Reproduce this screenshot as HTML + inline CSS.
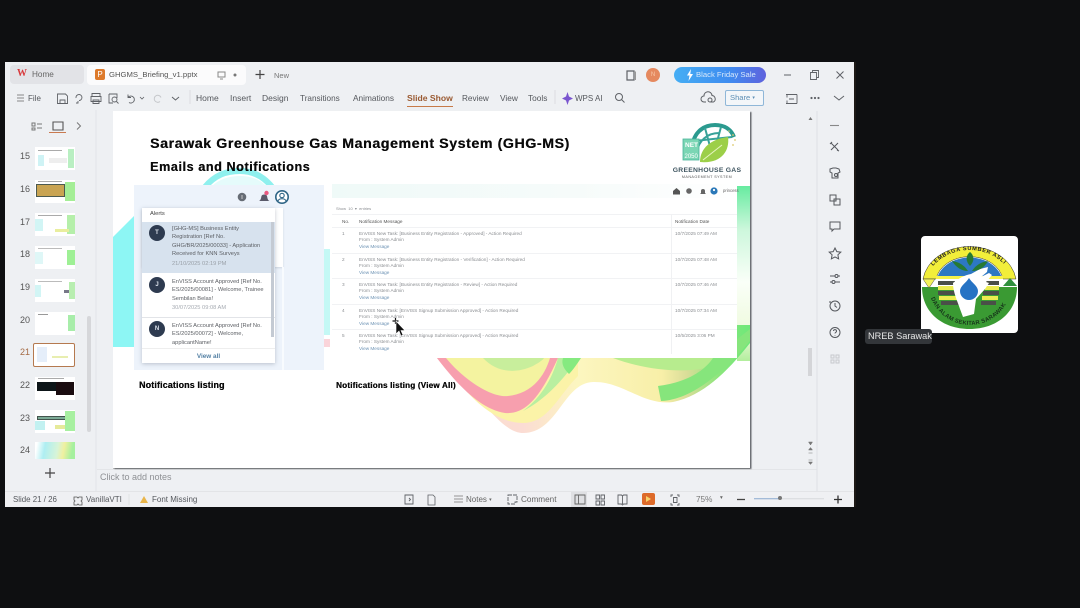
<!DOCTYPE html>
<html lang="en"><head><meta charset="utf-8"><title>GHG-MS Briefing</title>
<style>
*{box-sizing:border-box;margin:0;padding:0}
html,body{width:1080px;height:608px;overflow:hidden;background:#0e0f11;font-family:"Liberation Sans",sans-serif}
.a{position:absolute;white-space:nowrap}
#win{position:absolute;left:5px;top:62px;width:849px;height:445px;background:#eef0f3}
.t{position:absolute;white-space:nowrap;color:#55585d;font-size:8.5px;line-height:11px;filter:blur(.3px)}
.th{position:absolute;left:35px;width:40px;height:23px;background:#fff;overflow:hidden}
.n{position:absolute;left:20px;font-size:9px;color:#555;filter:blur(.25px)}
.nt{position:absolute;font-size:4.7px;line-height:6.4px;color:#8a8d91;white-space:nowrap;filter:blur(.3px)}
.al{position:absolute;font-size:5.7px;line-height:8.4px;color:#5c5f64;white-space:nowrap;filter:blur(.25px)}
.sep{position:absolute;left:219px;width:405px;height:1px;background:#f1f2f4}
.h{text-shadow:.3px 0 0 #0a0a0a}
svg{position:absolute;overflow:visible}
</style></head><body>
<div class="a" style="left:854px;top:62px;width:2px;height:445px;background:#1c1815"></div>
<div id="win"></div>

<!-- notes + status backgrounds -->
<div class="a" style="left:97px;top:469px;width:720px;height:22px;background:#eef0f3;border-top:1px solid #e3e5e8"></div>
<div class="a" style="left:5px;top:491px;width:849px;height:16px;background:#eff0f3;border-top:1px solid #e3e4e7"></div>
<div class="a" style="left:571px;top:492px;width:16px;height:15px;background:#dfe0e3"></div>

<!-- tabs -->
<div class="a" style="left:10px;top:65px;width:74px;height:19px;background:#e2e3e7;border-radius:4px"></div>
<div class="a" style="left:87px;top:65px;width:159px;height:20px;background:#fbfbfc;border-radius:4px"></div>
<div class="t" style="left:17px;top:68px;font-size:10px;font-weight:bold;color:#d8393c;font-family:'Liberation Serif',serif">W</div>
<div class="t" style="left:32px;top:69px;font-size:8.2px;color:#666">Home</div>
<div class="a" style="left:95px;top:69px;width:10px;height:11px;background:#dd7a2c;border-radius:2px;color:#fff;font-size:8px;line-height:11px;text-align:center">P</div>
<div class="t" style="left:109px;top:69px;font-size:7.7px;color:#555">GHGMS_Briefing_v1.pptx</div>
<svg style="left:0;top:0" width="1080" height="608" fill="none" stroke="#5f6267" stroke-width="1">
<path d="M218 72h7v5h-7zM220 79h3" stroke="#888"/><circle cx="235" cy="75" r="1.5" fill="#777" stroke="none"/>
<path d="M260 70v9M255.500 74.500h9" stroke="#444" stroke-width="1.200"/>
<path d="M627 71h7v9h-7z" stroke-width="1.200"/><path d="M634 72h1.500v8" stroke="#999"/>
<path d="M784 75h7" /><path d="M810.500 72.500h6v7h-6zM812.500 72.500v-2h6v7h-2" stroke-width=".9"/><path d="M836.500 71.500l7 7M843.500 71.500l-7 7"/>
<path d="M17 95h7M17 98h7M17 101h7" stroke="#888"/>
<path d="M57.500 94h8l2 2v7.500h-10zM60 103v-3h5v3" stroke-width=".9"/>
<path d="M76 98a3 3 0 1 1 3 2.500M78 101v2h-2" stroke-width=".9"/>
<path d="M92 96v-2.500h8V96M91 96.500h10v5h-10zM93 100h6v3.500h-6z" stroke-width=".9"/>
<path d="M109 94h8v4M109 94v9h4" stroke-width=".9"/><circle cx="114.500" cy="99.500" r="2.500" stroke-width=".9"/><path d="M116.500 101.500l2 2" stroke-width=".9"/>
<path d="M128 97.500a3.500 3.500 0 1 1 1 5M128 94.500v3h3" stroke-width=".9"/><path d="M140 97l2 2 2-2" stroke-width=".8"/>
<path d="M161 97.500a3.500 3.500 0 1 0-1 4" stroke="#c5c7cb"/><path d="M172 97l3.500 3 3.500-3"/>
<circle cx="619" cy="97" r="3.500"/><path d="M621.500 99.500l3 3"/>
<path d="M190 90v14" stroke="#dcdde0"/><path d="M555 90v14" stroke="#dcdde0"/>
<path d="M706 102h-2a3 3 0 0 1 0-6 4 4 0 0 1 8-.5 3.500 3.500 0 0 1 1.500 6.500h-3"/><circle cx="710" cy="100" r="2"/>
<path d="M786 94.500h11M786 103.500h11M787 94.500v3M787 100.500v3M797 94.500v9M789 99h5" stroke-width=".9"/>
<circle cx="811.500" cy="98" r=".6" fill="#555"/><circle cx="815" cy="98" r=".6" fill="#555"/><circle cx="818.500" cy="98" r=".6" fill="#555"/>
<path d="M834 96l5 4 5-4"/>
<path d="M32 123h3v3h-3zM32 128h3v2h-3zM37 124h5M37 128h5" stroke="#777"/>
<path d="M53 122h10v8h-10z" stroke="#555" stroke-width="1.100"/>
<path d="M77 122.500l3.500 3.500-3.500 3.500" stroke="#777"/>
<path d="M45 473h10M50 468v10" stroke="#444" stroke-width="1.200"/>
<path d="M830 125.500h9" stroke="#888" stroke-width="1.100"/>
<g stroke="#55585d" stroke-width="1">
<path d="M831 143l7 7M838 143l-7 7M830 144l2-2M839 151l-2-1"/>
<path d="M830 169l3-1h3l3 1 1 3-2 1v5h-6v-5l-2-1z"/><circle cx="836" cy="175" r="1.500"/>
<path d="M830 195h6v6h-6zM834 199h6v6h-6z"/>
<path d="M830 222h10v7h-6l-2 2v-2h-2z"/>
<path d="M835 248l1.800 3.600 4 .5-2.900 2.700.7 4-3.600-1.900-3.600 1.900.7-4-2.900-2.700 4-.5z"/>
<path d="M830 276h5M838 276h2M830 282h2M835 282h5"/><circle cx="836.500" cy="276" r="1.500"/><circle cx="833.500" cy="282" r="1.500"/>
<circle cx="835" cy="306" r="5"/><path d="M835 303v3l2 1.500M830 303v-2"/>
<circle cx="835" cy="332.500" r="5"/><path d="M833.500 331a1.500 1.500 0 1 1 2 1.500c-.5.300-.5.800-.5 1M835 335.300v.4"/>
<path d="M831 355h3v3h-3zM836 355h3v3h-3zM831 360h3v3h-3zM836 360h3v3h-3z" stroke="#c7c9cd"/>
</g>
<path d="M817 111v380" stroke="#dfe1e4"/>
<path d="M96 110v381" stroke="#e3e5e8"/>
<path d="M74 497h3l1 1 1-1h3v3l-1 1 1 1v3h-3l-1-1-1 1h-3v-3l1-1-1-1z" stroke="#555" stroke-width=".8"/>
<path d="M144 496l4 7h-8z" fill="#e9b54a" stroke="none"/>
<path d="M129 494v11" stroke="#e2e3e6"/>
<path d="M405 495h8v9h-8zM409 498l1.500 1.500-1.500 1.500" stroke-width=".9"/>
<path d="M428 495h5l2 2v8h-7z" stroke-width=".8"/>
<path d="M454 496h9M454 499h9M454 502h9" stroke="#777" stroke-width=".8"/>
<path d="M508 495h9v7h-2v2h-7z" stroke-width=".9" stroke-dasharray="4 1"/>
<path d="M575 495h10v9h-10zM578.500 495v9" stroke="#666" stroke-width=".9"/>
<path d="M596 495h3.500v4H596zM601 495h3.500v4H601zM596 501h3.500v4H596zM601 501h3.500v4H601z" stroke-width=".9"/>
<path d="M618 495h3.500l1 1 1-1h3.500v9h-3.500l-1 1-1-1H618zM622.500 496v8" stroke-width=".9"/>
<path d="M671 497v-2h2M677 495h2v2M679 503v2h-2M673 505h-2v-2M673.500 497.500h3.500v5h-3.500z" stroke-width=".9"/>
<path d="M737 499.500h8" stroke="#444" stroke-width="1.300"/>
<path d="M834 499.500h8M838 495.500v8" stroke="#333" stroke-width="1.300"/>
<path d="M754 498.700h25" stroke="#8aa9cf" stroke-width="1"/><path d="M782 498.700h42" stroke="#d7d9dc" stroke-width="1"/>
</svg>
<div class="t" style="left:274px;top:70px;font-size:7.5px;color:#777">New</div>
<div class="a" style="left:646px;top:68px;width:14px;height:14px;border-radius:50%;background:#e5895f;color:#f8c8a8;font-size:6px;line-height:14px;text-align:center">N</div>
<div class="a" style="left:674px;top:67px;width:92px;height:16px;border-radius:8px;background:linear-gradient(90deg,#45aef4,#3f8cf0 60%,#5f62dd);color:#d7e8fb;font-size:7.7px;line-height:16px;padding-left:22px;filter:blur(.3px)">Black Friday Sale</div>
<svg style="left:686px;top:69px" width="8" height="12"><path d="M5 0L1 6.500h2.500L2.500 12 7 5H4.300z" fill="#fff"/></svg>

<!-- menu -->
<div class="t" style="left:28px;top:93px;font-size:8px">File</div>
<div class="t" style="left:196px;top:93px">Home</div>
<div class="t" style="left:230px;top:93px">Insert</div>
<div class="t" style="left:262px;top:93px">Design</div>
<div class="t" style="left:300px;top:93px;font-size:8.2px">Transitions</div>
<div class="t" style="left:353px;top:93px;font-size:8.3px">Animations</div>
<div class="t" style="left:407px;top:93px;color:#9a5a32;font-weight:bold;font-size:8.6px">Slide Show</div>
<div class="a" style="left:407px;top:106px;width:46px;height:1px;background:#c77a48"></div>
<div class="t" style="left:462px;top:93px;font-size:8.2px">Review</div>
<div class="t" style="left:500px;top:93px;font-size:8.3px">View</div>
<div class="t" style="left:528px;top:93px;font-size:8.3px">Tools</div>
<div class="t" style="left:575px;top:93px;font-size:8px">WPS AI</div>
<svg style="left:562px;top:92px" width="11" height="13"><path d="M5.500 0l1.500 4.500 4 2-4 2-1.500 4.500-1.500-4.500-4-2 4-2z" fill="#7a55cf"/></svg>
<div class="a" style="left:725px;top:90px;width:39px;height:16px;border:1px solid #8fb7d8;border-radius:2px;background:#f3f6f9;color:#5d8fb5;font-size:7.6px;line-height:14px;padding-left:4px;filter:blur(.2px)">Share <span style="font-size:5px;vertical-align:1px">▾</span></div>

<!-- panel -->
<div class="a" style="left:49px;top:132px;width:17px;height:1px;background:#c97a50"></div>
<div class="a" style="left:87px;top:316px;width:4px;height:116px;background:#d6d7da;border-radius:2px"></div>

<div class="n" style="top:151px">15</div><div class="n" style="top:184px">16</div><div class="n" style="top:217px">17</div><div class="n" style="top:249px">18</div><div class="n" style="top:282px">19</div><div class="n" style="top:315px">20</div><div class="n" style="top:347px;color:#a56b45">21</div><div class="n" style="top:380px">22</div><div class="n" style="top:413px">23</div><div class="n" style="top:445px">24</div>

<div class="th" style="top:147px"><div class="a" style="left:3px;top:3px;width:24px;height:1px;background:#aaa"></div><div class="a" style="left:33px;top:2px;width:6px;height:19px;background:#b9efc2"></div><div class="a" style="left:3px;top:8px;width:6px;height:11px;background:#cff3f5"></div><div class="a" style="left:14px;top:11px;width:18px;height:5px;background:#eee"></div></div>
<div class="th" style="top:180px"><div class="a" style="left:3px;top:1px;width:24px;height:1px;background:#aaa"></div><div class="a" style="left:30px;top:2px;width:10px;height:19px;background:#a4ee96"></div><div class="a" style="left:1px;top:4px;width:29px;height:13px;background:#c9a452;border:1px solid #4c5a50"></div></div>
<div class="th" style="top:213px"><div class="a" style="left:3px;top:2px;width:24px;height:1px;background:#aaa"></div><div class="a" style="left:32px;top:2px;width:8px;height:19px;background:#b5efaa"></div><div class="a" style="left:0;top:6px;width:8px;height:12px;background:#d2f5f5"></div><div class="a" style="left:20px;top:16px;width:14px;height:3px;background:#e9ee9e"></div></div>
<div class="th" style="top:246px"><div class="a" style="left:3px;top:2px;width:24px;height:1px;background:#bbb"></div><div class="a" style="left:32px;top:4px;width:8px;height:15px;background:#9ef095"></div><div class="a" style="left:0;top:6px;width:8px;height:12px;background:#dff7f7"></div></div>
<div class="th" style="top:279px"><div class="a" style="left:3px;top:2px;width:24px;height:1px;background:#bbb"></div><div class="a" style="left:34px;top:3px;width:6px;height:17px;background:#b8eeb0"></div><div class="a" style="left:0;top:6px;width:6px;height:12px;background:#d2f5f5"></div><div class="a" style="left:29px;top:11px;width:5px;height:3px;background:#778"></div></div>
<div class="th" style="top:312px"><div class="a" style="left:3px;top:2px;width:10px;height:1px;background:#999"></div><div class="a" style="left:33px;top:3px;width:7px;height:16px;background:#a8edaa"></div></div>
<div class="a" style="left:33px;top:343px;width:42px;height:24px;background:#fff;border:1.500px solid #b5794f;border-radius:2px"></div>
<div class="a" style="left:37px;top:347px;width:10px;height:15px;background:#e5eefa"></div>
<div class="a" style="left:52px;top:356px;width:16px;height:2px;background:#e8eeb0"></div>
<div class="th" style="top:377px"><div class="a" style="left:2px;top:5px;width:19px;height:9px;background:#0d1518"></div><div class="a" style="left:21px;top:5px;width:18px;height:13px;background:#1a0c10"></div><div class="a" style="left:3px;top:1px;width:26px;height:1px;background:#aaa"></div></div>
<div class="th" style="top:410px"><div class="a" style="left:2px;top:6px;width:29px;height:4px;background:#7cab96;border:1px solid #44554e"></div><div class="a" style="left:30px;top:1px;width:10px;height:20px;background:#a7f0a0"></div><div class="a" style="left:0;top:11px;width:10px;height:9px;background:#c2f1f1"></div><div class="a" style="left:20px;top:15px;width:10px;height:4px;background:#e6ea9a"></div></div>
<div class="th" style="top:442px;height:17px;background:linear-gradient(100deg,#fff 5%,#aeeef2 25%,#d7f4d8 55%,#f0f0a0 70%,#a5f09e 90%)"></div>

<!-- slide -->
<div class="a" style="left:113px;top:111px;width:637px;height:357px;background:#fff;box-shadow:1.500px 1px 1px #6a6d71,0 1px 0 #bbb;overflow:hidden">
<svg style="left:0;top:0" width="637" height="357">
<defs>
<linearGradient id="g1" x1="0" x2="1"><stop offset="0" stop-color="#fbe0c8"/><stop offset=".28" stop-color="#fbdcd4"/><stop offset=".45" stop-color="#fcf6c0"/><stop offset=".72" stop-color="#f8efa8"/><stop offset=".8" stop-color="#d9dd98"/><stop offset=".9" stop-color="#8ce67c"/><stop offset="1" stop-color="#6ee87a"/></linearGradient>
<linearGradient id="g2" x1="0" x2="0" y1="0" y2="1"><stop offset="0" stop-color="#67eba0"/><stop offset=".25" stop-color="#cdf7dc"/><stop offset=".55" stop-color="#fafff8"/><stop offset=".85" stop-color="#eefadc"/><stop offset="1" stop-color="#b2ee9c"/></linearGradient>
</defs>
<!-- top arc -->
<path d="M92 76C102 64 113 60 127 60c14 0 24 6 32 16" fill="none" stroke="#8ff0ee" stroke-width="6"/>
<path d="M98 76c8-8 18-11 29-11 12 0 21 4 27 11z" fill="#e5fbfb"/>
<!-- left cyan -->
<path d="M0 126L21 105V236H0z" fill="#8df6f4"/>
<path d="M211 138h6v86h-6z" fill="#c4f8f5"/><path d="M211 228h6v8h-6z" fill="#fad4da"/>
<!-- right strip -->
<rect x="624" y="75" width="13" height="175" fill="url(#g2)"/>
<!-- wave -->
<path d="M322 240L324 247C340 268 355 280 370 292 385 310 398 322 410 322c35 0 40-50 70-51 30-1 50 24 80 20 30-6 55-31 77-59v-18H322z" fill="url(#g1)"/>
<path d="M345 270C362 292 385 312 410 312c25 0 35-27 55-47v-18H335z" fill="#fbf3a8"/>
<path d="M324 247C340 268 365 298 392 302c23 2 38-22 53-55z" fill="#f79fae"/>
<path d="M333 247C350 268 378 287 395 285c20-2 35-15 42-38z" fill="#f4f3a0"/>
<path d="M370 247c12 13 30 17 50 8 5-3 9-5 11-8z" fill="#c8ee9c"/>
<path d="M445 247h20C450 270 430 290 410 300c20-15 30-35 35-53z" fill="#b9efa0"/>
<path d="M450 247h18c-4 6-8 12-12 16-5-5-8-10-6-16z" fill="#85ea80"/>
<path d="M500 247c40 15 90 18 120 0z" fill="#b7ec8e"/>
<path d="M548 290c30-1 62-28 89-60v-12l-37 29c-10 15-30 25-55 28z" fill="#86e57c"/>
</svg>
<div class="a h" style="left:37px;top:25px;font-size:14.2px;line-height:17px;font-weight:bold;color:#0a0a0a;letter-spacing:.57px;filter:blur(.2px)">Sarawak Greenhouse Gas Management System (GHG-MS)</div>
<div class="a h" style="left:37px;top:48px;font-size:12.6px;line-height:16px;font-weight:bold;color:#0a0a0a;letter-spacing:.58px;filter:blur(.2px)">Emails and Notifications</div>

<!-- logo -->
<svg style="left:570px;top:12px" width="60" height="42">
<path d="M9 28C9 10 20 2 32 2c9 0 16 4 19 12" fill="none" stroke="#2b9a8f" stroke-width="4"/>
<path d="M14 28C16 18 24 10 36 10M22 5l6 22M38 4L32 26M11 18l38-4" fill="none" stroke="#37a299" stroke-width="2"/>
<rect x="0" y="16" width="16" height="21" fill="#7bd6b4" stroke="#4bb59b" stroke-width=".8"/>
<text x="2" y="24" font-size="6.500" font-weight="bold" fill="#fff" font-family="Liberation Sans">NET</text>
<text x="1.500" y="35" font-size="6" fill="#fff" font-family="Liberation Sans">2050</text>
<path d="M17 39C17 25 28 16 45 14c2 14-7 27-28 25z" fill="#9ccf48"/><path d="M20 37L39 22" stroke="#e7f4c2" stroke-width="1"/>
<circle cx="46" cy="8" r=".8" fill="#dcc86a"/><circle cx="50" cy="12" r=".9" fill="#dcc86a"/><circle cx="52" cy="17" r=".9" fill="#dcc86a"/><circle cx="50" cy="22" r=".9" fill="#dcc86a"/>
</svg>
<div class="a" style="left:558px;top:55px;width:72px;text-align:center;font-size:6.8px;line-height:9px;font-weight:bold;color:#3f5560;letter-spacing:.25px;filter:blur(.2px)">GREENHOUSE GAS</div>
<div class="a" style="left:558px;top:64px;width:72px;text-align:center;font-size:3.7px;line-height:5px;color:#555;letter-spacing:.45px">MANAGEMENT SYSTEM</div>

<!-- left panel -->
<div class="a" style="left:21px;top:74px;width:190px;height:185px;background:#edf3fb"></div>
<div class="a" style="left:29px;top:97px;width:141px;height:59px;background:#fff;box-shadow:0 1px 2px rgba(90,100,120,.2)"></div>
<div class="a" style="left:169px;top:156px;width:2px;height:103px;background:#f8fbfe"></div>
<svg style="left:0;top:0" width="220" height="110">
<circle cx="129" cy="86" r="4.300" fill="#666c75"/><path d="M129 84v4" stroke="#ddd" stroke-width=".8"/>
<path d="M146 90c2-1 2-3 2.500-5 .5-2 5-2 5.500 0 .5 2 .5 4 2.500 5z" fill="#5a5a6a"/><circle cx="153.500" cy="82" r="2.200" fill="#ea5a82"/>
<circle cx="169" cy="86" r="6.200" fill="#fff" stroke="#2f6586" stroke-width="1.600"/><circle cx="169" cy="84.500" r="2.200" fill="none" stroke="#2f6586" stroke-width="1.100"/><path d="M165 90c1-3 7-3 8 0" fill="none" stroke="#2f6586" stroke-width="1.100"/>
</svg>
<div class="a" style="left:29px;top:97px;width:133px;height:155px;background:#fff;box-shadow:0 1px 4px rgba(90,100,120,.35)"></div>
<div class="al" style="left:37px;top:99px;font-size:5.8px;line-height:9px;color:#444">Alerts</div>
<div class="a" style="left:29px;top:111px;width:133px;height:51px;background:#d7e2ee"></div>
<div class="a" style="left:29px;top:206px;width:133px;height:1px;background:#e2e4e8"></div>
<div class="a" style="left:158px;top:111px;width:3px;height:115px;background:#c4cad3"></div>
<div class="a" style="left:36px;top:114px;width:16px;height:16px;border-radius:50%;background:#2e3b50;color:#dfe5ee;font-size:6px;font-weight:bold;line-height:16px;text-align:center">T</div>
<div class="a" style="left:36px;top:166px;width:16px;height:16px;border-radius:50%;background:#2e3b50;color:#dfe5ee;font-size:6px;font-weight:bold;line-height:16px;text-align:center">J</div>
<div class="a" style="left:36px;top:210px;width:16px;height:16px;border-radius:50%;background:#2e3b50;color:#dfe5ee;font-size:6px;font-weight:bold;line-height:16px;text-align:center">N</div>
<div class="al" style="left:59px;top:114px">[GHG-MS] Business Entity<br>Registration [Ref No.<br>GHG/BR/2025/00033] - Application<br>Received for KNN Surveys</div>
<div class="al" style="left:59px;top:149px;color:#9aa0a8">21/10/2025 02:19 PM</div>
<div class="al" style="left:59px;top:167px">EnVISS Account Approved [Ref No.<br>ES/2025/00081] - Welcome, Trainee<br>Sembilan Belas!</div>
<div class="al" style="left:59px;top:193px;color:#a6abb2">30/07/2025 09:08 AM</div>
<div class="al" style="left:59px;top:211px">EnVISS Account Approved [Ref No.<br>ES/2025/00072] - Welcome,<br>applicantName!</div>
<div class="a" style="left:29px;top:237px;width:133px;height:15px;background:#fff;text-align:center;color:#5480a4;font-size:6.4px;line-height:15px;font-weight:bold;border-top:1px solid #eee;filter:blur(.2px)">View all</div>
<div class="a h" style="left:26px;top:269px;font-size:8.9px;line-height:11px;font-weight:bold;color:#0a0a0a;letter-spacing:.15px;filter:blur(.2px)">Notifications listing</div>

<!-- right table -->
<div class="a" style="left:219px;top:73px;width:405px;height:174px;background:#fff"></div>
<div class="a" style="left:219px;top:73px;width:405px;height:14px;background:linear-gradient(90deg,#effaf8,#f6fbfa 60%,#fff)"></div>
<svg style="left:0;top:0" width="637" height="90">
<path d="M560 80l3.500-3 3.500 3v3.500h-7z" fill="#555"/><circle cx="576" cy="80" r="2.800" fill="#666"/><path d="M587 83l1-1v-2a2 2 0 0 1 4 0v2l1 1z" fill="#666"/>
<circle cx="601" cy="80" r="3.600" fill="#2b78b8"/><circle cx="601" cy="79" r="1.100" fill="#fff"/>
</svg>
<div class="nt" style="left:610px;top:77px;font-size:4.200px;color:#666">princess</div>
<div class="nt" style="left:223px;top:95px;font-size:4px">Show&nbsp; 10&nbsp; ▾&nbsp; entries</div>
<div class="sep" style="top:103px"></div><div class="sep" style="top:116px"></div><div class="sep" style="top:142px"></div><div class="sep" style="top:167px"></div><div class="sep" style="top:193px"></div><div class="sep" style="top:218px"></div>
<div class="a" style="left:558px;top:103px;width:1px;height:140px;background:#f0f1f3"></div>
<div class="nt" style="left:229px;top:108px;color:#555">No.</div>
<div class="nt" style="left:246px;top:108px;color:#555">Notification Message</div>
<div class="nt" style="left:562px;top:108px;color:#555">Notification Date</div>

<div class="nt" style="left:229px;top:120px">1</div>
<div class="nt" style="left:246px;top:120px">EnVISS New Task: [Business Entity Registration - Approved] - Action Required<br>From : System Admin<br><span style="color:#6c92b4">View Message</span></div>
<div class="nt" style="left:562px;top:120px">10/7/2025 07:49 AM</div>
<div class="nt" style="left:229px;top:146px">2</div>
<div class="nt" style="left:246px;top:146px">EnVISS New Task: [Business Entity Registration - Verification] - Action Required<br>From : System Admin<br><span style="color:#6c92b4">View Message</span></div>
<div class="nt" style="left:562px;top:146px">10/7/2025 07:48 AM</div>
<div class="nt" style="left:229px;top:171px">3</div>
<div class="nt" style="left:246px;top:171px">EnVISS New Task: [Business Entity Registration - Review] - Action Required<br>From : System Admin<br><span style="color:#6c92b4">View Message</span></div>
<div class="nt" style="left:562px;top:171px">10/7/2025 07:46 AM</div>
<div class="nt" style="left:229px;top:197px">4</div>
<div class="nt" style="left:246px;top:197px">EnVISS New Task: [EnVISS Signup Submission Approved] - Action Required<br>From : System Admin<br><span style="color:#6c92b4">View Message</span></div>
<div class="nt" style="left:562px;top:197px">10/7/2025 07:34 AM</div>
<div class="nt" style="left:229px;top:222px">5</div>
<div class="nt" style="left:246px;top:222px">EnVISS New Task: [EnVISS Signup Submission Approved] - Action Required<br>From : System Admin<br><span style="color:#6c92b4">View Message</span></div>
<div class="nt" style="left:562px;top:222px">10/5/2025 3:06 PM</div>
<div class="a h" style="left:223px;top:269px;font-size:8.1px;line-height:11px;font-weight:bold;color:#0a0a0a;letter-spacing:.2px;filter:blur(.2px)">Notifications listing (View All)</div>
<!-- cursor -->
<svg style="left:276px;top:203px" width="20" height="20">
<path d="M6.500 4v6M3.500 7h6" stroke="#111" stroke-width="1.200"/>
<path d="M7 7v13l3-3 2 5 2-1-2-4.500h4z" fill="#111" stroke="#fff" stroke-width=".6"/>
</svg>
</div>

<!-- notes -->
<div class="t" style="left:100px;top:472px;font-size:9px;color:#8e9094">Click to add notes</div>
<div class="a" style="left:808px;top:348px;width:4px;height:28px;background:#d4d5d8"></div>
<svg style="left:806px;top:112px" width="10" height="360"><path d="M2.500 8l2-3 2 3z" fill="#777"/><path d="M2.500 330l2 3 2-3zM2.500 338l2-2.500 2 2.500zM2.500 341h4M2.500 348h4M2.500 350l2 2.500 2-2.500z" fill="#777" stroke="#777" stroke-width=".5"/></svg>

<!-- status bar -->
<div class="t" style="left:13px;top:494px;font-size:7.9px">Slide 21 / 26</div>
<div class="t" style="left:86px;top:494px;font-size:8px">VanillaVTI</div>
<div class="t" style="left:152px;top:494px;font-size:8px">Font Missing</div>
<div class="t" style="left:466px;top:494px;font-size:8px;color:#666">Notes <span style="font-size:5px;vertical-align:1px">▾</span></div>
<div class="t" style="left:521px;top:494px;font-size:8.2px;color:#666">Comment</div>
<div class="a" style="left:642px;top:493px;width:13px;height:12px;background:#dd6a2a;border-radius:2px"></div>
<svg style="left:646px;top:496px" width="6" height="6"><path d="M0 0l5 3-5 3z" fill="#f7d26a"/></svg>
<div class="t" style="left:696px;top:494px;font-size:8.2px;color:#777">75%</div>
<div class="t" style="left:720px;top:493px;font-size:5.500px;color:#666">▾</div>
<div class="a" style="left:778px;top:496px;width:4px;height:4px;border-radius:50%;background:#777"></div>

<!-- participant -->
<div class="a" style="left:921px;top:236px;width:97px;height:97px;background:#fff;border-radius:4px;overflow:hidden">
<svg width="97" height="97" viewBox="0 0 97 97" style="left:0;top:0">
<path d="M2 43A47 38 0 0 1 95 43H82A34 27 0 0 0 15 43z" fill="#f2ee3a" stroke="#2a2a2a" stroke-width=".5"/>
<path d="M16 43A33 26 0 0 1 81 43z" fill="#2d78c2"/>
<path d="M15 40h67v3H15z" fill="#f6f24a"/>
<path d="M1 51H96C96 76 76 93 48.500 93S1 76 1 51z" fill="#3a9a33"/>
<path d="M2 43h12l-6 9z" fill="#f4f25a" stroke="#444" stroke-width=".5"/>
<path d="M82 50l7-8 7 8z" fill="#2f8f3c"/>
<g fill="#4a4f48"><rect x="17" y="45" width="17" height="4"/><rect x="17" y="55" width="18" height="4"/><rect x="20" y="65" width="18" height="4"/><rect x="64" y="45" width="14" height="4"/><rect x="62" y="55" width="16" height="4"/><rect x="60" y="65" width="15" height="4"/></g>
<g fill="#ecec50"><rect x="17" y="50" width="17" height="4"/><rect x="18" y="60" width="18" height="4"/><rect x="64" y="50" width="14" height="4"/><rect x="61" y="60" width="16" height="4"/></g>
<path d="M32 47c6-5 12-8 18-9l9-5 8-2-1 5-6 5 8-4 3 2-6 7 3 1-4 6-9 10-2 15-11 3-3-8c-3-9-7-17-7-26z" fill="#fff"/>
<path d="M48 42c3 5 9 8 9 13a9 9 0 0 1-18 0c0-5 6-8 9-13z" fill="#2673c4"/>
<path d="M47 35c-4-6-9-9-16-10 4 6 9 10 16 10zM51 35c4-6 9-9 16-10-4 7-9 10-16 10zM49 30c-5-5-4-11 0-14 4 3 5 9 0 14z" fill="#267a33"/>
<path id="t1" d="M12 30A49.600 49.600 0 0 1 85 30" fill="none"/>
<path id="t2" d="M10 62A41.700 41.700 0 0 0 88 62" fill="none"/>
<text font-size="5.600" font-weight="bold" fill="#222" font-family="Liberation Sans" letter-spacing=".6"><textPath href="#t1">LEMBAGA SUMBER ASLI</textPath></text>
<text font-size="5.800" font-weight="bold" fill="#16331a" font-family="Liberation Sans" letter-spacing=".2"><textPath href="#t2">DAN ALAM SEKITAR SARAWAK</textPath></text>
</svg></div>
<div class="a" style="left:865px;top:329px;width:67px;height:15px;background:#33363a;border-radius:3px;color:#e6e6e6;font-size:9.2px;line-height:15px;padding-left:3px;filter:blur(.15px)">NREB Sarawak</div>
</body></html>
